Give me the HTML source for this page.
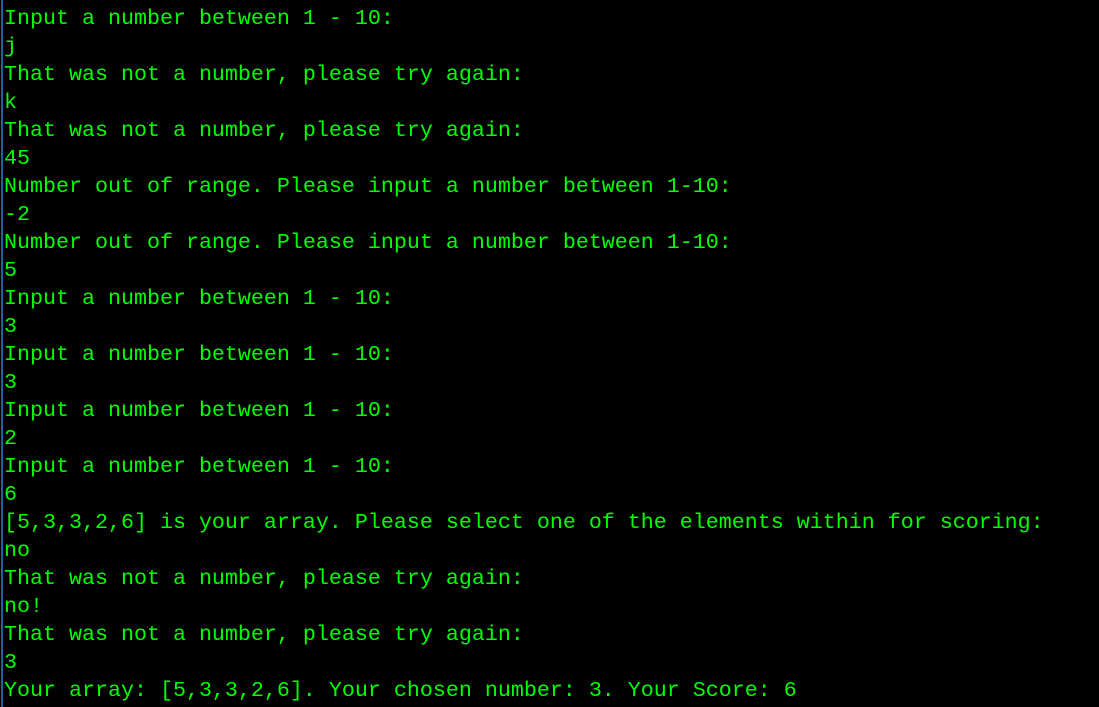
<!DOCTYPE html>
<html><head><style>
html,body{margin:0;padding:0;background:#000;width:1099px;height:707px;overflow:hidden}
.b{position:absolute;left:1px;top:0;width:2px;height:707px;background:#1f5fa8}
pre{margin:0;position:absolute;left:4px;top:5px;font-family:"Liberation Mono",monospace;font-size:21.67px;line-height:28px;color:#00ff00}
</style></head><body><div class="b"></div><pre>Input a number between 1 - 10:
j
That was not a number, please try again:
k
That was not a number, please try again:
45
Number out of range. Please input a number between 1-10:
-2
Number out of range. Please input a number between 1-10:
5
Input a number between 1 - 10:
3
Input a number between 1 - 10:
3
Input a number between 1 - 10:
2
Input a number between 1 - 10:
6
[5,3,3,2,6] is your array. Please select one of the elements within for scoring:
no
That was not a number, please try again:
no!
That was not a number, please try again:
3
Your array: [5,3,3,2,6]. Your chosen number: 3. Your Score: 6</pre></body></html>
